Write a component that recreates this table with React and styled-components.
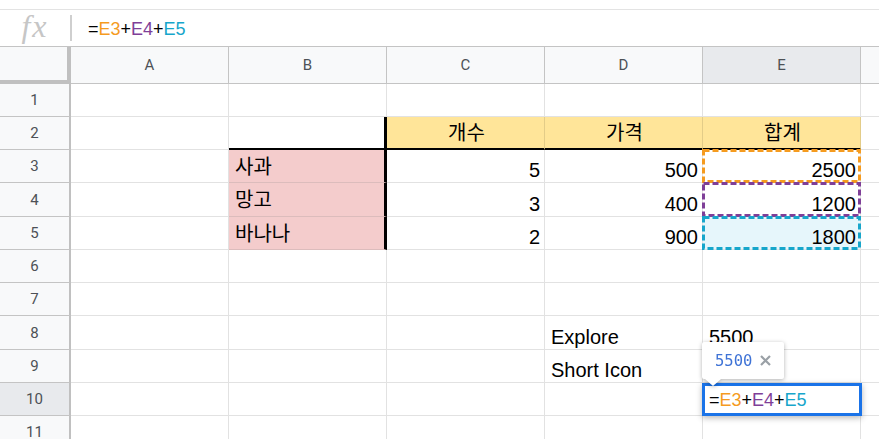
import React from 'react';
import styled, { createGlobalStyle } from 'styled-components';

const Global = createGlobalStyle`
  html, body { margin: 0; padding: 0; background: #fff; overflow: hidden; }
  body { font-family: "Liberation Sans", Arial, sans-serif; }
`;

const COLORS = {
  orange: '#f59b1f',
  purple: '#7f3f98',
  cyan: '#17a6cb',
  grid: '#e2e2e2',
  headLine: '#c4c4c4',
  headBg: '#f8f9fa',
  headSel: '#e8eaed',
};

const Page = styled.div`
  width: 879px;
  height: 439px;
  overflow: hidden;
  display: flex;
  flex-direction: column;
`;

const TopStrip = styled.div`
  flex: none;
  height: 9px;
  border-bottom: 1px solid #e3e3e3;
`;

const FormulaBar = styled.div`
  flex: none;
  height: 36px;
  display: flex;
  align-items: center;
  border-bottom: 1px solid ${COLORS.headLine};
`;

const FxBox = styled.div`
  width: 70px;
  display: flex;
  justify-content: center;
  font-family: "Liberation Serif", "Times New Roman", serif;
  font-style: italic;
  font-size: 32px;
  letter-spacing: 2px;
  color: #c6c6c6;
  line-height: 30px;
  padding-bottom: 4px;
`;

const Divider = styled.div`
  width: 2px;
  height: 26px;
  background: #cfcfcf;
`;

const Formula = styled.div`
  margin-left: 16px;
  font-size: 18px;
  line-height: 20px;
  color: #000;
  padding-top: 2px;
`;

const Ref = styled.span`
  color: ${p => p.$color};
`;

const Sheet = styled.div`
  flex: 1;
  min-height: 0;
  overflow: hidden;
  display: grid;
  grid-template-columns: 71px repeat(5, 158px) 1fr;
  grid-template-rows: 37px 33px 33px 33px 34px 33px 33px 33px 34px 33px 33px 33px;
`;

const Corner = styled.div`
  box-sizing: border-box;
  background: ${COLORS.headBg};
  border-right: 4px solid #c0c0c0;
  border-bottom: 4px solid #c0c0c0;
`;

const ColHead = styled.div`
  box-sizing: border-box;
  background: ${p => (p.$selected ? COLORS.headSel : COLORS.headBg)};
  border-right: ${p => (p.$last ? 'none' : `1px solid ${COLORS.headLine}`)};
  border-bottom: 1px solid ${COLORS.headLine};
  display: flex;
  align-items: center;
  justify-content: center;
  font-family: Roboto, "Liberation Sans", sans-serif;
  font-size: 15px;
  color: #4d5156;
`;

const RowHead = styled.div`
  box-sizing: border-box;
  background: ${p => (p.$selected ? COLORS.headSel : COLORS.headBg)};
  border-right: 2px solid #c0c0c0;
  border-bottom: 1px solid ${COLORS.headLine};
  display: flex;
  align-items: center;
  justify-content: center;
  font-family: Roboto, "Liberation Sans", sans-serif;
  font-size: 15px;
  color: #4d5156;
`;

const toneBg = { yellow: '#ffe599', pink: '#f4cccc', cyan: '#e6f6fb' };

const Cell = styled.div`
  position: relative;
  box-sizing: border-box;
  background: ${p => toneBg[p.$tone] || '#fff'};
  border-right: ${p =>
    p.$edgeR ? '3px solid #000'
    : p.$last ? 'none'
    : p.$tone === 'yellow' ? '1px solid #e3cc88'
    : `1px solid ${COLORS.grid}`};
  border-bottom: ${p =>
    p.$edgeB ? '2px solid #000'
    : p.$tone === 'pink' ? '1px solid #dcbcbc'
    : `1px solid ${COLORS.grid}`};
  display: flex;
  align-items: ${p => (p.$ko ? 'center' : 'flex-end')};
  justify-content: ${p =>
    p.$align === 'right' ? 'flex-end' : p.$align === 'center' ? 'center' : 'flex-start'};
  padding: 0 4px 1px 6px;
  font-family: ${p =>
    p.$ko
      ? '"Noto Sans CJK KR", "Liberation Sans", sans-serif'
      : '"Liberation Sans", Arial, sans-serif'};
  font-size: 20px;
  line-height: 22px;
  color: #000;
  white-space: nowrap;
`;

const Marquee = styled.svg`
  position: absolute;
  top: -1px;
  left: -1px;
  pointer-events: none;
  overflow: visible;
`;

const Editor = styled.div`
  position: absolute;
  z-index: 2;
  top: 0;
  left: -1px;
  right: -2px;
  bottom: -1px;
  box-sizing: border-box;
  border: 3px solid #1a73e8;
  background: #fff;
  box-shadow: 0 2px 6px rgba(0, 0, 0, 0.28);
  display: flex;
  align-items: center;
  padding: 0 4px;
  font-family: "Liberation Sans", Arial, sans-serif;
  font-size: 18px;
  line-height: 20px;
`;

const Tip = styled.div`
  position: absolute;
  z-index: 3;
  left: -1px;
  bottom: calc(100% + 4px);
  width: 82px;
  height: 37px;
  box-sizing: border-box;
  background: #fff;
  border-radius: 2px;
  filter: drop-shadow(0 1px 2px rgba(0, 0, 0, 0.3));
  display: flex;
  align-items: center;
  gap: 8px;
  padding: 0 0 0 13px;

  &::after {
    content: '';
    position: absolute;
    left: 3px;
    top: 100%;
    border-left: 8px solid transparent;
    border-right: 8px solid transparent;
    border-top: 7px solid #fff;
  }
`;

const TipValue = styled.span`
  font-family: "DejaVu Sans Mono", "Liberation Mono", monospace;
  font-size: 15.5px;
  color: #3f73d6;
`;

const CloseIcon = () => (
  <svg width="11" height="11" viewBox="0 0 11 11">
    <path d="M1 1 L10 10 M10 1 L1 10" stroke="#9aa0a6" strokeWidth="2.2" strokeLinecap="butt" />
  </svg>
);

const FormulaTokens = () => (
  <>
    =<Ref $color={COLORS.orange}>E3</Ref>+<Ref $color={COLORS.purple}>E4</Ref>+
    <Ref $color={COLORS.cyan}>E5</Ref>
  </>
);

const COLS = ['A', 'B', 'C', 'D', 'E', 'F'];

const rows = [
  { n: 1, cells: {} },
  {
    n: 2,
    cells: {
      B: { edgeR: true, edgeB: true },
      C: { v: '개수', tone: 'yellow', ko: true, align: 'center', edgeB: true },
      D: { v: '가격', tone: 'yellow', ko: true, align: 'center', edgeB: true },
      E: { v: '합계', tone: 'yellow', ko: true, align: 'center', edgeB: true },
    },
  },
  {
    n: 3,
    cells: {
      B: { v: '사과', tone: 'pink', ko: true, edgeR: true },
      C: { v: '5', align: 'right' },
      D: { v: '500', align: 'right' },
      E: { v: '2500', align: 'right', mark: COLORS.orange },
    },
  },
  {
    n: 4,
    cells: {
      B: { v: '망고', tone: 'pink', ko: true, edgeR: true },
      C: { v: '3', align: 'right' },
      D: { v: '400', align: 'right' },
      E: { v: '1200', align: 'right', mark: COLORS.purple },
    },
  },
  {
    n: 5,
    cells: {
      B: { v: '바나나', tone: 'pink', ko: true, edgeR: true },
      C: { v: '2', align: 'right' },
      D: { v: '900', align: 'right' },
      E: { v: '1800', align: 'right', tone: 'cyan', mark: COLORS.cyan },
    },
  },
  { n: 6, cells: {} },
  { n: 7, cells: {} },
  { n: 8, cells: { D: { v: 'Explore' }, E: { v: '5500' } } },
  { n: 9, cells: { D: { v: 'Short Icon' } } },
  { n: 10, selected: true, cells: { E: { editor: true } } },
  { n: 11, cells: {} },
];

const MarqueeBox = ({ color, h }) => (
  <Marquee width="159" height={h + 1} viewBox={`0 0 159 ${h + 1}`}>
    <rect
      x="1.5"
      y="1.5"
      width="156"
      height={h - 2}
      fill="none"
      stroke={color}
      strokeWidth="3"
      strokeDasharray="6 3"
    />
  </Marquee>
);

export default function App() {
  return (
    <>
      <Global />
      <Page>
        <TopStrip />
        <FormulaBar>
          <FxBox>fx</FxBox>
          <Divider />
          <Formula>
            <FormulaTokens />
          </Formula>
        </FormulaBar>
        <Sheet>
          <Corner />
          {COLS.map((c, i) => (
            <ColHead key={c} $selected={c === 'E'} $last={i === COLS.length - 1}>
              {c === 'F' ? '' : c}
            </ColHead>
          ))}
          {rows.map(r => (
            <React.Fragment key={r.n}>
              <RowHead $selected={r.selected}>{r.n}</RowHead>
              {COLS.map((c, i) => {
                const s = r.cells[c] || {};
                return (
                  <Cell
                    key={c}
                    $tone={s.tone}
                    $ko={s.ko}
                    $align={s.align}
                    $edgeR={s.edgeR}
                    $edgeB={s.edgeB}
                    $last={i === COLS.length - 1}
                  >
                    {s.v}
                    {s.mark && <MarqueeBox color={s.mark} h={r.n === 4 ? 34 : 33} />}
                    {s.editor && (
                      <>
                        <Tip>
                          <TipValue>5500</TipValue>
                          <CloseIcon />
                        </Tip>
                        <Editor>
                          <FormulaTokens />
                        </Editor>
                      </>
                    )}
                  </Cell>
                );
              })}
            </React.Fragment>
          ))}
        </Sheet>
      </Page>
    </>
  );
}
